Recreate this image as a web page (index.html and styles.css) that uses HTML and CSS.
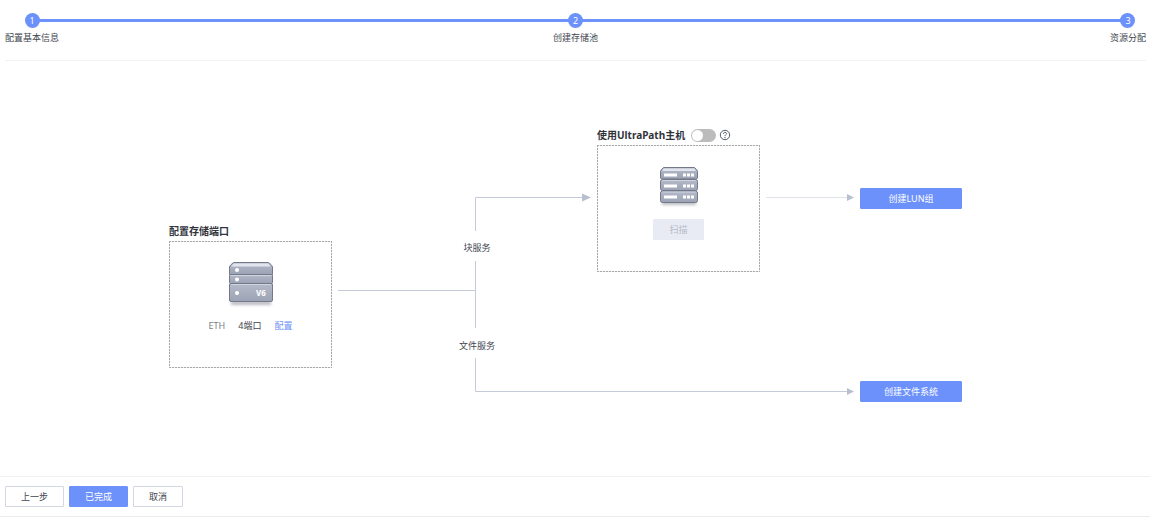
FILE: index.html
```html
<!DOCTYPE html>
<html lang="zh-CN">
<head>
<meta charset="utf-8">
<title>资源分配</title>
<link rel="stylesheet" href="styles.css">
</head>
<body>
<header class="header">
  <ol class="steps">
    <li class="step"><span class="step-num">1</span><span>配置基本信息</span></li>
    <li class="step"><span class="step-num">2</span><span>创建存储池</span></li>
    <li class="step step-last"><span class="step-num">3</span><span>资源分配</span></li>
  </ol>
</header>

<main class="main">
  <div class="diagram">
    <svg class="links" viewBox="0 0 812 290" aria-hidden="true">
      <g fill="none" stroke="#c5cad8">
        <path d="M169 169.500H306.500M306.500 110V76.500H414M306.500 140V207M306.500 237V270.500H679"/>
        <path d="M597 76.500H679" stroke="#dfe1ea"/>
      </g>
      <path d="M413 72.500l9 4-9 4zM678 73l7 3.500-7 3.500zM678 267l7 3.500-7 3.500z" fill="#b8bfce"/>
    </svg>

    <section class="node node-port">
      <h2 class="node-title">配置存储端口</h2>
      <div class="box">
        <svg class="port-icon" viewBox="0 0 46 48" aria-hidden="true">
          <defs>
            <linearGradient id="metal" x2="0" y2="1"><stop offset="0" stop-color="#b4bac9"/><stop offset="1" stop-color="#9ca3b4"/></linearGradient>
            <filter id="soft" x="-20%" y="-200%" width="140%" height="500%"><feGaussianBlur stdDeviation="1.500"/></filter>
          </defs>
          <rect x="3" y="39" width="40" height="4" fill="#8a8f9b" opacity=".6" filter="url(#soft)"/>
          <g fill="url(#metal)" stroke="#737988">
            <path d="M1.500 12.500V5q0-1.500 4-4.500h35q4 3 4 4.500v7.500z"/>
            <rect x="1.500" y="12.500" width="43" height="9" rx="1"/>
            <rect x="1.500" y="21.500" width="43" height="18" rx="1.500"/>
          </g>
          <path d="M6 1.500h34l3 3H3z" fill="#e1e5ee"/>
          <path d="M3 13.500h40M3 22.500h40" stroke="#d0d5e0"/>
          <g fill="#fff"><circle cx="9" cy="8" r="2"/><circle cx="9" cy="17.500" r="2"/><circle cx="9" cy="31" r="2"/></g>
          <text class="port-model" x="28" y="34">V6</text>
        </svg>
        <div class="port-info">
          <span class="port-type">ETH</span><span>4端口</span><a class="port-link" href="#config">配置</a>
        </div>
      </div>
    </section>

    <span class="label label-block">块服务</span>
    <span class="label label-file">文件服务</span>

    <section class="node node-host">
      <div class="title-row">
        <h2 class="node-title"><label for="ultrapath">使用UltraPath主机</label></h2>
        <input class="toggle" type="checkbox" role="switch" id="ultrapath">
        <svg class="help" viewBox="0 0 12 12" role="img" aria-label="帮助">
          <g fill="none" stroke="#555b68"><circle cx="6" cy="6" r="4.700"/><path d="M4.500 4.900C4.500 2.700 7.500 2.900 7.500 4.700 7.500 5.700 6 5.800 6 7.200"/></g>
          <circle cx="6" cy="8.700" r=".65" fill="#555b68"/>
        </svg>
      </div>
      <div class="box">
        <svg class="host-icon" viewBox="0 0 40 44" aria-hidden="true">
          <rect x="3" y="35" width="34" height="4" fill="#8a8f9b" opacity=".6" filter="url(#soft)"/>
          <g fill="url(#metal)" stroke="#737988">
            <path d="M1.500 12V5.500q0-1.500 3-4h31q3 2.500 3 4V12l-1 1h-35z"/>
            <rect x="1.500" y="13.500" width="37" height="11" rx="2"/>
            <rect x="1.500" y="25" width="37" height="11.500" rx="2"/>
          </g>
          <path d="M5 2.500h30l2 2.500H3z" fill="#e1e5ee"/>
          <path d="M3.500 14.500h33M3.500 26h33" stroke="#d0d5e0"/>
          <g fill="#fff">
            <path d="M5 7.500h13v3H5zM5 18.500h13v3H5zM5 29.500h13v3H5z"/>
            <path d="M24 7.500h3v3h-3zM28 7.500h3v3h-3zM32 7.500h3v3h-3zM24 18.500h3v3h-3zM28 18.500h3v3h-3zM32 18.500h3v3h-3zM24 29.500h3v3h-3zM28 29.500h3v3h-3zM32 29.500h3v3h-3z"/>
          </g>
        </svg>
        <button class="btn btn-disabled" type="button" disabled>扫描</button>
      </div>
    </section>

    <button class="btn btn-primary node-action action-lun" type="button">创建LUN组</button>
    <button class="btn btn-primary node-action action-fs" type="button">创建文件系统</button>
  </div>
</main>

<footer class="footer">
  <button class="btn" type="button">上一步</button>
  <button class="btn btn-primary" type="button">已完成</button>
  <button class="btn" type="button">取消</button>
</footer>
</body>
</html>
```
FILE: styles.css
```css
* { box-sizing: border-box; }

body {
  display: flex;
  flex-direction: column;
  min-height: 100vh;
  margin: 0;
  background: #fff;
  color: #42464f;
  font: 9px/12px "Noto Sans", "Noto Sans CJK SC", sans-serif;
}

.header {
  margin: 0 4px 0 5px;
  padding: 13px 0 16px;
  border-bottom: 1px solid #f2f2f4;
}

.steps {
  position: relative;
  display: grid;
  grid-template-columns: 1fr auto 1fr;
  margin: 0;
  padding: 0;
  list-style: none;
}

.steps::before {
  content: "";
  position: absolute;
  top: 6px;
  left: 27px;
  right: 18px;
  height: 3px;
  background: #6e93fc;
}

.step {
  position: relative;
  display: flex;
  flex-direction: column;
  align-items: center;
  justify-self: start;
  gap: 4px;
}

.step-last { justify-self: end; }

.step-num {
  width: 15px;
  height: 15px;
  border-radius: 50%;
  background: #6c91fb;
  color: #fff;
  line-height: 15px;
  text-align: center;
}

.main {
  display: flex;
  flex: 1;
  justify-content: center;
  padding-top: 60px;
}

/* Topology canvas */
.diagram {
  position: relative;
  flex: none;
  width: 812px;
  height: 290px;
}

.links {
  display: block;
  width: 812px;
  height: 290px;
}

.node, .label, .node-action { position: absolute; }

.node { width: 163px; }
.node-port { left: 0; top: 100px; }
.node-host { left: 428px; top: 4px; }

.node-title {
  margin: 0;
  color: #30333a;
  font-size: 10px;
  font-weight: 700;
  line-height: 20px;
}

.title-row {
  display: flex;
  align-items: center;
  gap: 3px;
}

.title-row .node-title { margin-right: 3px; }

/* Fine dashed frame: 2px dash, 1px gap */
.box {
  display: flex;
  flex-direction: column;
  align-items: center;
  height: 127px;
  padding-top: 21px;
  background:
    repeating-linear-gradient(90deg, #a9a9a9 0 2px, #eee 2px 3px) top / 100% 1px no-repeat,
    repeating-linear-gradient(90deg, #a9a9a9 0 2px, #eee 2px 3px) bottom / 100% 1px no-repeat,
    repeating-linear-gradient(#a9a9a9 0 2px, #eee 2px 3px) left / 1px 100% no-repeat,
    repeating-linear-gradient(#a9a9a9 0 2px, #eee 2px 3px) right / 1px 100% no-repeat;
}

.port-icon { width: 46px; height: 48px; }
.port-model { fill: #fff; font-size: 8px; font-weight: 700; }

.port-info {
  display: flex;
  gap: 13px;
  margin-top: 10px;
}

.port-type { color: #7b7e86; }
.port-link { color: #6c91fb; text-decoration: none; }

.host-icon { width: 40px; height: 44px; }

.toggle {
  appearance: none;
  display: flex;
  width: 25px;
  height: 13px;
  margin: 0;
  padding: 1px;
  border-radius: 7px;
  background: #bcbcbc;
}

.toggle::before {
  content: "";
  width: 11px;
  height: 11px;
  border-radius: 50%;
  background: #fff;
}

.toggle:checked { justify-content: flex-end; background: #6c91fb; }

.help { width: 12px; height: 12px; }

.label { transform: translateX(-50%); white-space: nowrap; }
.label-block { left: 308px; top: 121px; }
.label-file { left: 308px; top: 219px; }

.btn {
  height: 21px;
  padding: 0 15px;
  border: 1px solid #d3d7e2;
  border-radius: 1px;
  background: #fff;
  color: #42464f;
  font: inherit;
}

.btn-primary {
  border-color: #6c91fb;
  background: #6c91fb;
  color: #fff;
}

.btn-disabled {
  margin-top: 9px;
  border-color: #e8ebf3;
  background: #e8ebf3;
  color: #b5bac6;
}

.node-action { left: 691px; width: 102px; }
.action-lun { top: 67px; }
.action-fs { top: 260px; }

.footer {
  display: flex;
  gap: 5px;
  padding: 9px 5px;
  border-top: 1px solid #f0f0f2;
  border-bottom: 1px solid #ebebed;
}
```
